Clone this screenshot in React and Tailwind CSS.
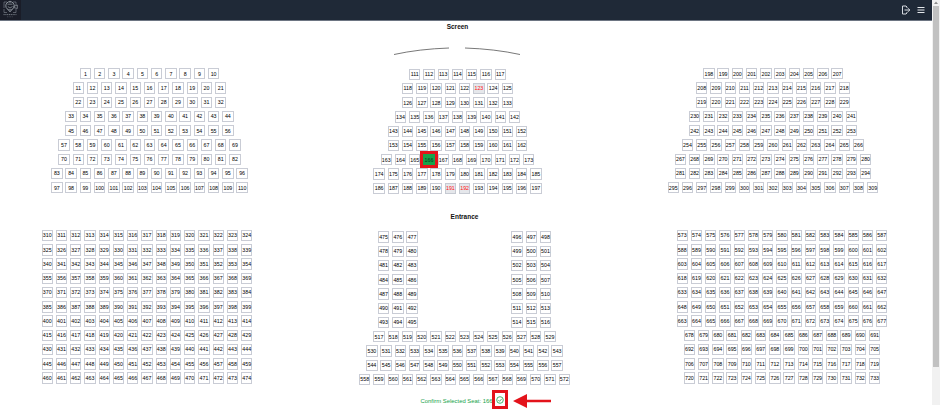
const range = (start, count) => Array.from({ length: count }, (_, i) => start + i);

// Builds consecutive rows of seat numbers from a list of row lengths.
const rowsFrom = (start, counts) => {
  let next = start;
  return counts.map((count) => {
    const row = range(next, count);
    next += count;
    return row;
  });
};

const TAKEN = new Set([123, 191, 192]);
const SELECTED = 166;

const BLOCKS = {
  leftTop: rowsFrom(1, [10, 11, 11, 12, 12, 13, 13, 14, 14]),
  midTop: rowsFrom(111, [7, 8, 8, 9, 10, 10, 11, 12, 12]),
  rightTop: rowsFrom(198, [10, 11, 11, 12, 12, 13, 14, 14, 15]),
  leftBottom: rowsFrom(310, Array(11).fill(15)),
  aisleLeft: rowsFrom(475, Array(7).fill(3)),
  aisleRight: rowsFrom(496, Array(7).fill(3)),
  midBottom: rowsFrom(517, [13, 14, 14, 15]),
  rightBottom: rowsFrom(573, [...Array(7).fill(15), ...Array(4).fill(14)]),
};

function Seat({ n }) {
  const base =
    "relative flex h-[11.4px] w-[11.4px] shrink-0 items-center justify-center border pt-px text-[5.3px] leading-none ";
  if (n === SELECTED) {
    return (
      <button className={base + "border-[#16a34a] bg-[#16a34a] text-[#08301a]"}>
        {n}
        <span className="absolute -inset-[4px] z-10 border-[3px] border-[#e3131b]" />
      </button>
    );
  }
  if (TAKEN.has(n)) {
    return <button className={base + "border-[#c6cad2] bg-[#e5e7eb] text-[#ff0f0f]"}>{n}</button>;
  }
  return <button className={base + "border-[#c9ccd5] bg-white text-black"}>{n}</button>;
}

function Block({ rows }) {
  return (
    <div className="flex flex-col items-center gap-[2.86px]">
      {rows.map((row) => (
        <div key={row[0]} className="flex gap-[2.86px]">
          {row.map((n) => (
            <Seat key={n} n={n} />
          ))}
        </div>
      ))}
    </div>
  );
}

function Logo() {
  return (
    <svg viewBox="0 0 21 20" className="h-5 w-[21px] bg-[#1a1d28]" fill="none" stroke="#9aa1a8" strokeWidth="0.7">
      <path d="M4 8V2h3M13 2h3v3M4 9v3.5h3M16 9v3.5h-3" strokeWidth="0.5" />
      <circle cx="10" cy="5.8" r="4.2" strokeWidth="0.9" />
      <path d="M7.5 4.2h5M7.8 6.5l2.2 1.5 2.5-1.5M10 0.8v2M8 9.5l2 2.5 2-2.5M13.5 6.5l3.8-1.5v3.5l-3.8-1" />
      <path d="M3.5 14.6h13" strokeWidth="1" strokeDasharray="1.2 0.6" opacity="0.7" />
      <path d="M7 16.8h6" strokeWidth="0.5" strokeDasharray="1 0.6" opacity="0.6" />
    </svg>
  );
}

function Header() {
  return (
    <header className="flex h-[21px] items-start justify-between border-b border-[#6d7582] bg-[#1f2937] pr-[7px]">
      <Logo />
      <div className="flex h-[19px] items-center gap-[6px]">
        <svg viewBox="0 0 10 10" className="h-[10px] w-[10px]" fill="none" stroke="#d6dae0" strokeWidth="1">
          <path d="M6 3V2L5 1H1.5v8H5L6 8V7M3.5 5H8.5M7 3.2L8.8 5 7 6.8" />
        </svg>
        <svg viewBox="0 0 8 8" className="h-2 w-2" fill="none" stroke="#e4e7eb" strokeWidth="1">
          <path d="M0.5 1.5h7M0.5 4h7M0.5 6.5h7" />
        </svg>
      </div>
    </header>
  );
}

function Scrollbar() {
  return (
    <div className="flex h-[405px] w-2 flex-col items-center bg-[#f1f1f1]">
      <svg viewBox="0 0 8 6" className="h-[6px] w-2 shrink-0" fill="#8b8b8b">
        <path d="M4 1.5L6 4H2z" />
      </svg>
      <div className="h-[361px] w-[6px] bg-[#c1c1c1]" />
    </div>
  );
}

export default function App() {
  return (
    <div className="flex h-[410px] w-[940px] overflow-hidden bg-white font-['Liberation_Sans',Arial,sans-serif]">
      <div className="flex w-[932px] shrink-0 flex-col">
        <Header />

        <main className="flex flex-col">
          <section className="flex pl-[50px]">
            <div className="flex w-[199px] flex-col pt-[47px]">
              <Block rows={BLOCKS.leftTop} />
            </div>
            <div className="ml-[108px] flex w-[201px] flex-col items-center">
              <h2 className="mt-px h-[9px] text-[6.5px] leading-[9px] font-bold text-[#111]">Screen</h2>
              <svg viewBox="0 0 128 8" className="mt-[15.5px] mr-px h-2 w-[128px]" fill="none" stroke="#555" strokeWidth="0.8">
                <path d="M1 7.5Q26 2 56 1M72 1Q102 2 127 7.5" />
              </svg>
              <div className="mt-[14px]">
                <Block rows={BLOCKS.midTop} />
              </div>
            </div>
            <div className="ml-[107px] flex w-[216px] flex-col pt-[47px]">
              <Block rows={BLOCKS.rightTop} />
            </div>
          </section>

          <section className="mt-[17px] flex pl-[39px]">
            <div className="flex w-[216px] flex-col pt-[19px]">
              <Block rows={BLOCKS.leftBottom} />
            </div>
            <div className="ml-[101px] flex w-[217px] flex-col items-center">
              <h2 className="mt-px h-[9px] text-[6.5px] leading-[9px] font-bold text-[#111]">Entrance</h2>
              <div className="mt-[10.4px] flex gap-[93.5px]">
                <Block rows={BLOCKS.aisleLeft} />
                <Block rows={BLOCKS.aisleRight} />
              </div>
              <div className="mt-[2.86px]">
                <Block rows={BLOCKS.midBottom} />
              </div>
              <div className="mt-[5px] flex h-[19px] w-full items-center pl-[64.5px] text-[5.9px] leading-none text-[#16a34a]">
                <span className="w-[71.5px] shrink-0 pt-[4px] whitespace-nowrap">Confirm Selected Seat: 166</span>
                <span className="flex h-[19px] w-[16px] shrink-0 items-center justify-center border-[3px] border-[#e3131b] pt-px">
                  <svg viewBox="0 0 8 8" className="h-2 w-2 shrink-0" fill="none" stroke="#16a34a" strokeWidth="0.8">
                    <circle cx="4" cy="4" r="3.3" />
                    <path d="M2.4 4.1l1.2 1.2 2.1-2.4" />
                  </svg>
                </span>
                <svg viewBox="0 0 38 14" className="mt-[2px] ml-[5px] h-[14px] w-[38px] shrink-0" fill="#e3131b">
                  <path d="M0 7L14 0V5.7H38V8.3H14V14z" />
                </svg>
              </div>
            </div>
            <div className="ml-[101px] flex w-[216px] flex-col pt-[19px]">
              <Block rows={BLOCKS.rightBottom} />
            </div>
          </section>
        </main>
      </div>
      <Scrollbar />
    </div>
  );
}
